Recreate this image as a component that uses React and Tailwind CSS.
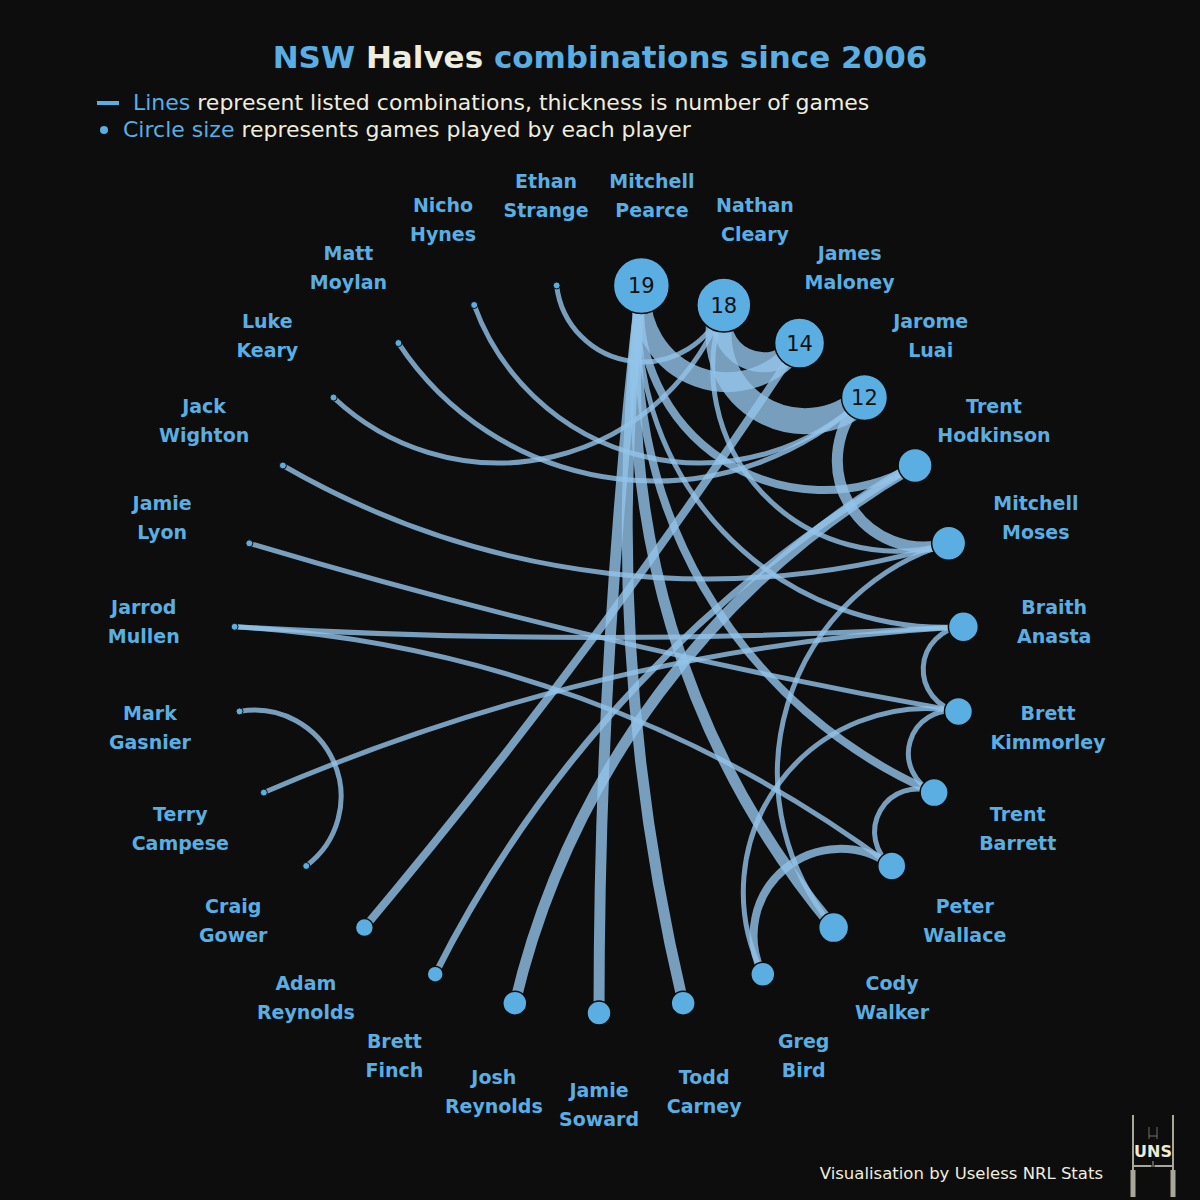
const CX = 599;
const CY = 648;
const R = 365;
const LABEL_R = 456;
const BLUE = "#5aaee2";

const players = [
  ["Jamie", "Soward", 12],
  ["Josh", "Reynolds", 12],
  ["Brett", "Finch", 8],
  ["Adam", "Reynolds", 9],
  ["Craig", "Gower", 3.5],
  ["Terry", "Campese", 3.5],
  ["Mark", "Gasnier", 3.5],
  ["Jarrod", "Mullen", 3.5],
  ["Jamie", "Lyon", 3.5],
  ["Jack", "Wighton", 3.5],
  ["Luke", "Keary", 3.5],
  ["Matt", "Moylan", 3.5],
  ["Nicho", "Hynes", 3.5],
  ["Ethan", "Strange", 3.5],
  ["Mitchell", "Pearce", 28, "19"],
  ["Nathan", "Cleary", 27, "18"],
  ["James", "Maloney", 25, "14"],
  ["Jarome", "Luai", 23, "12"],
  ["Trent", "Hodkinson", 17],
  ["Mitchell", "Moses", 17],
  ["Braith", "Anasta", 15],
  ["Brett", "Kimmorley", 14],
  ["Trent", "Barrett", 14],
  ["Peter", "Wallace", 14],
  ["Cody", "Walker", 15],
  ["Greg", "Bird", 12],
  ["Todd", "Carney", 12],
];

// [from, to, games]
const combos = [
  [14, 16, 6],
  [15, 16, 6],
  [15, 17, 8],
  [17, 19, 3],
  [13, 15, 1],
  [12, 17, 1],
  [11, 17, 1],
  [10, 15, 1],
  [9, 19, 1],
  [8, 21, 1],
  [7, 20, 1],
  [7, 23, 1],
  [6, 4, 1],
  [5, 20, 1],
  [3, 16, 2],
  [2, 18, 1.5],
  [1, 18, 3],
  [0, 14, 3],
  [26, 14, 3],
  [24, 14, 3],
  [18, 14, 2],
  [22, 14, 2],
  [20, 14, 1],
  [15, 19, 1],
  [24, 19, 1],
  [25, 23, 2],
  [25, 21, 1],
  [20, 21, 1],
  [21, 22, 1],
  [22, 23, 1],
];

const angleOf = (i) => ((90 + (i * 360) / players.length) * Math.PI) / 180;

const nodes = players.map((p, i) => {
  const a = angleOf(i);
  return {
    first: p[0],
    last: p[1],
    r: p[2],
    count: p[3],
    a,
    x: CX + R * Math.cos(a),
    y: CY + R * Math.sin(a),
    lx: CX + LABEL_R * Math.cos(a),
    ly: CY + LABEL_R * Math.sin(a),
  };
});

// arc through the ring that meets the circle square-on at both ends
const arcPath = (i, j) => {
  const p = nodes[i];
  const q = nodes[j];
  let d = Math.abs(p.a - q.a) % (2 * Math.PI);
  if (d > Math.PI) d = 2 * Math.PI - d;
  if (d > Math.PI - 0.001) return `M${p.x} ${p.y}L${q.x} ${q.y}`;
  const r = R * Math.tan(d / 2);
  const cross = (q.x - p.x) * (CY - p.y) - (q.y - p.y) * (CX - p.x);
  const sweep = cross < 0 ? 1 : 0;
  return `M${p.x} ${p.y}A${r} ${r} 0 0 ${sweep} ${q.x} ${q.y}`;
};

const Chart = () => (
  <svg
    width="1200"
    height="967"
    viewBox="0 143 1200 967"
    className="block overflow-visible"
  >
    <g fill="none" stroke="#92c3e8" strokeOpacity="0.8">
      {combos.map(([a, b, g]) => (
        <path key={`${a}-${b}`} d={arcPath(a, b)} strokeWidth={2 + 3 * g} />
      ))}
    </g>
    {nodes.map((n) => (
      <g key={n.first + n.last}>
        <circle
          cx={n.x}
          cy={n.y}
          r={n.r}
          fill={BLUE}
          stroke="#0d0d0d"
          strokeWidth={n.r > 5 ? 1.5 : 1}
        />
        {n.count ? (
          <text
            x={n.x}
            y={n.y + 7.5}
            textAnchor="middle"
            fontSize="21"
            fill="#111"
            fontFamily="DejaVu Sans, sans-serif"
          >
            {n.count}
          </text>
        ) : null}
        <text
          x={n.lx}
          textAnchor="middle"
          fontSize="19"
          fontWeight="700"
          fill={BLUE}
          fontFamily="DejaVu Sans, sans-serif"
        >
          <tspan x={n.lx} y={n.ly - 7.5}>
            {n.first}
          </tspan>
          <tspan x={n.lx} y={n.ly + 21.5}>
            {n.last}
          </tspan>
        </text>
      </g>
    ))}
  </svg>
);

const Logo = () => (
  <svg width="50" height="86" viewBox="0 0 50 86" className="block">
    <g stroke="#a8a898" strokeWidth="2">
      <line x1="5" y1="3" x2="5" y2="60" />
      <line x1="45" y1="3" x2="45" y2="60" />
      <line x1="5" y1="54" x2="23.5" y2="54" />
      <line x1="26.5" y1="54" x2="45" y2="54" />
      <line x1="25" y1="49" x2="25" y2="55" strokeWidth="1" />
    </g>
    <g stroke="#8a8a7c" strokeWidth="0.8">
      <line x1="21" y1="15" x2="21" y2="27" />
      <line x1="29" y1="15" x2="29" y2="27" />
      <line x1="21" y1="24" x2="29" y2="24" />
    </g>
    <rect x="2.5" y="58" width="5" height="27" fill="#a8a898" />
    <rect x="42.5" y="58" width="5" height="27" fill="#a8a898" />
    <text
      x="25"
      y="45"
      textAnchor="middle"
      fontSize="16"
      fontWeight="700"
      fill="#ecebd8"
      fontFamily="DejaVu Sans, sans-serif"
    >
      UNS
    </text>
  </svg>
);

const App = () => {
  return (
    <div className="w-[1200px] h-[1200px] bg-[#0d0d0d] flex flex-col font-['DejaVu_Sans',sans-serif] overflow-hidden">
      <h1 className="pt-[37px] text-center text-[31px] leading-[40px] font-bold text-[#5aaee2]">
        NSW <span className="text-[#efeede]">Halves</span> combinations since 2006
      </h1>

      <div className="mt-[12px] pl-[97px] text-[22px] leading-[27px] text-[#efeede]">
        <div className="flex items-center">
          <span className="mr-[14px] h-[4px] w-[22px] bg-[#5aaee2]" />
          <span>
            <span className="text-[#5aaee2]">Lines</span> represent listed combinations,
            thickness is number of games
          </span>
        </div>
        <div className="flex items-center">
          <span className="ml-[3px] mr-[15px] h-[8px] w-[8px] rounded-full bg-[#5aaee2]" />
          <span>
            <span className="text-[#5aaee2]">Circle size</span> represents games played by
            each player
          </span>
        </div>
      </div>

      <Chart />

      <div className="flex h-[90px] items-end justify-end gap-[25px] pr-[22px] pb-[2px]">
        <span className="mb-[14px] text-[16.5px] leading-[20px] text-[#efeede]">
          Visualisation by Useless NRL Stats
        </span>
        <Logo />
      </div>
    </div>
  );
};

export default App;
